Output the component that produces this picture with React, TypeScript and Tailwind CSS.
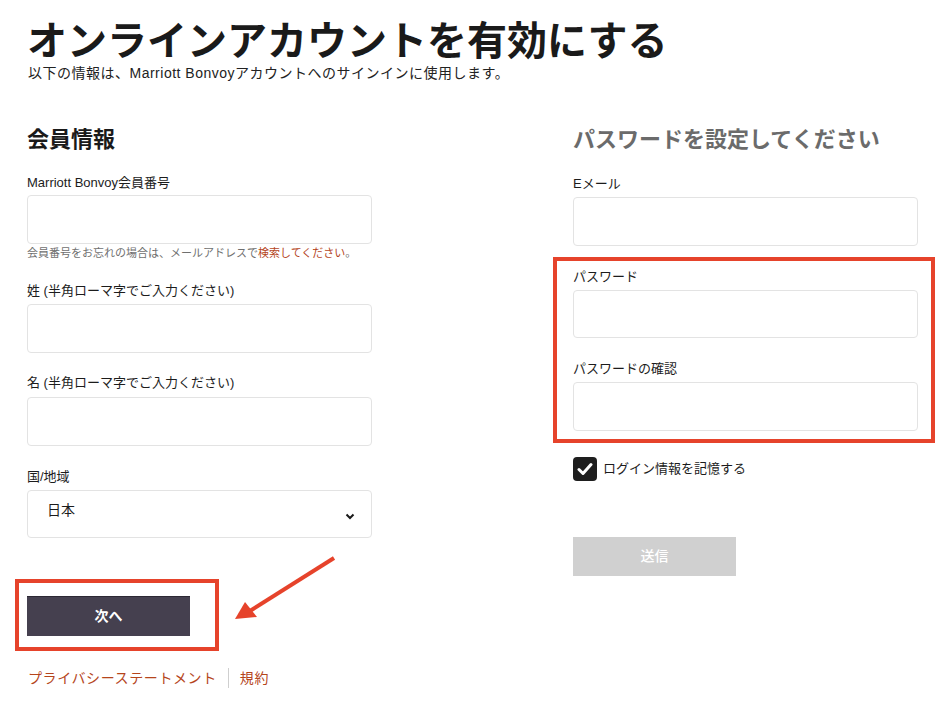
import React from "react";

const inputCls = "block w-full rounded-[4px] border border-[#e3e3e3] bg-white";
const labelCls = "block text-[13px] leading-[16px] text-[#1c1c1c]";

const App: React.FC = () => {
    return (
        <div
            className="relative w-[950px] h-[710px] bg-white overflow-hidden text-[#1c1c1c]"
            style={{ fontFamily: '"Liberation Sans", "Noto Sans CJK JP", sans-serif' }}
        >
            <div className="pl-[27px] pt-[21px]">
                <h1 className="text-[40px] leading-[40px] font-bold text-[#1a1a1a]">
                    オンラインアカウントを有効にする
                </h1>
                <p className="mt-[4px] pl-[1px] text-[14px] leading-[16px] tracking-[0.5px] text-[#222]">
                    以下の情報は、Marriott Bonvoyアカウントへのサインインに使用します。
                </p>
            </div>

            <div className="flex gap-[201px] pl-[27px] mt-[46px]">
                {/* left column */}
                <div className="w-[345px]">
                    <h2 className="text-[22px] leading-[26px] font-bold text-[#1a1a1a]">会員情報</h2>

                    <label className={`${labelCls} mt-[22px]`}>Marriott Bonvoy会員番号</label>
                    <div className={`${inputCls} mt-[4px] h-[49px]`} />
                    <p className="mt-[2px] text-[11px] leading-[14px] text-[#6f6f6f]">
                        会員番号をお忘れの場合は、メールアドレスで
                        <span className="text-[#b5451c]">検索してください</span>。
                    </p>

                    <label className={`${labelCls} mt-[23px]`}>姓 (半角ローマ字でご入力ください)</label>
                    <div className={`${inputCls} mt-[5px] h-[49px]`} />

                    <label className={`${labelCls} mt-[22px]`}>名 (半角ローマ字でご入力ください)</label>
                    <div className={`${inputCls} mt-[6px] h-[49px]`} />

                    <label className={`${labelCls} mt-[23px]`}>国/地域</label>
                    <div className={`${inputCls} mt-[5px] h-[48px] flex items-center justify-between pl-[19px] pr-[16px]`}>
                        <span className="text-[14px] leading-[16px] -mt-[8px]">日本</span>
                        <svg width="10" height="7" viewBox="0 0 10 7" className="mt-[4px]">
                            <path d="M1.5 1.5 L5 5 L8.5 1.5" fill="none" stroke="#1a1a1a" strokeWidth="2" />
                        </svg>
                    </div>

                    <div className="relative mt-[58px] w-[163px]">
                        <button className="block w-[163px] h-[40px] bg-[#45404f] border-t border-[#2c2834] text-white text-[14px] font-bold">
                            次へ
                        </button>
                        <div className="absolute -left-[12px] -top-[17px] -right-[29px] -bottom-[15px] border-[4px] border-[#e6432b]" />
                    </div>

                    <div className="mt-[32px] flex items-center text-[14px] leading-[18px] pl-[1px]">
                        <span className="text-[#b5451c] tracking-[0.6px]">プライバシーステートメント</span>
                        <span className="mx-[11px] h-[20px] w-px bg-[#cfcfcf]" />
                        <span className="text-[#b5451c] tracking-[0.6px]">規約</span>
                    </div>
                </div>

                {/* right column */}
                <div className="w-[345px]">
                    <h2 className="text-[22px] leading-[26px] font-bold text-[#6b6b6b]">
                        パスワードを設定してください
                    </h2>

                    <label className={`${labelCls} mt-[23px]`}>Eメール</label>
                    <div className={`${inputCls} mt-[5px] h-[49px]`} />

                    <div className="relative mt-[23px]">
                        <label className={labelCls}>パスワード</label>
                        <div className={`${inputCls} mt-[5px] h-[48px]`} />
                        <label className={`${labelCls} mt-[23px]`}>パスワードの確認</label>
                        <div className={`${inputCls} mt-[5px] h-[49px]`} />
                        <div className="absolute -left-[20px] -top-[12px] -right-[17px] -bottom-[12px] border-[4px] border-[#e6432b]" />
                    </div>

                    <div className="mt-[26px] flex items-center h-[24px]">
                        <span className="flex items-center justify-center w-[24px] h-[24px] rounded-[4px] bg-[#1e1e1e]">
                            <svg width="16" height="14" viewBox="0 0 16 14">
                                <path d="M2 7.5 L6 11.5 L14 2.5" fill="none" stroke="#fff" strokeWidth="3" strokeLinecap="round" strokeLinejoin="round" />
                            </svg>
                        </span>
                        <span className="ml-[6px] text-[13px] leading-[16px]">ログイン情報を記憶する</span>
                    </div>

                    <button className="block mt-[56px] w-[163px] h-[39px] bg-[#d0d0d0] text-white text-[14px] font-medium">
                        送信
                    </button>
                </div>
            </div>

            {/* annotation arrow */}
            <svg className="absolute left-[230px] top-[550px]" width="110" height="75" viewBox="0 0 110 75">
                <line x1="104" y1="8" x2="20" y2="61" stroke="#e6432b" strokeWidth="4" />
                <polygon points="5,69 15,52 27,67" fill="#e6432b" />
            </svg>
        </div>
    );
};

export default App;
